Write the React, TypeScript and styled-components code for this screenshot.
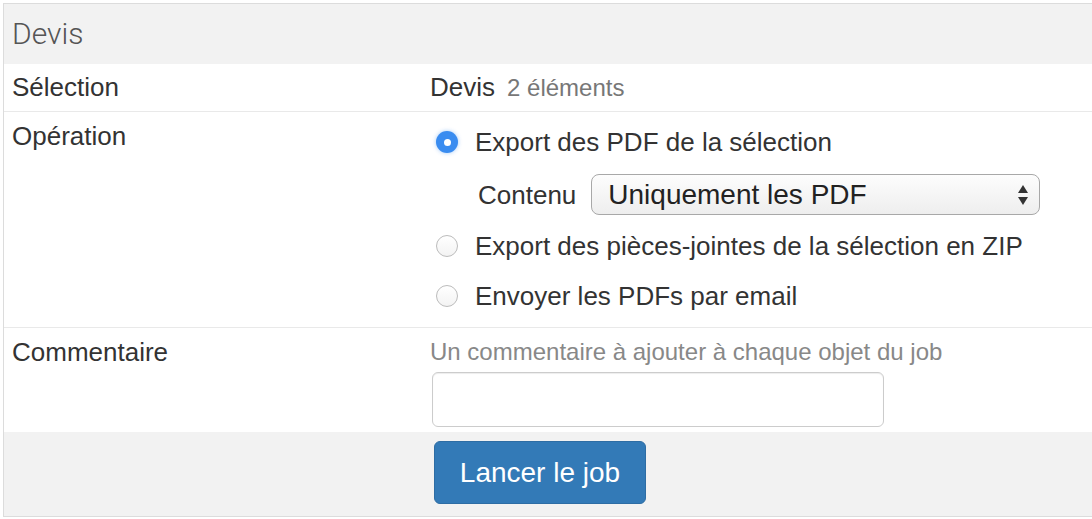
import React from "react";
import styled, { createGlobalStyle, css } from "styled-components";

const Global = createGlobalStyle`
  html, body { margin: 0; padding: 0; background: #fff; overflow: hidden; }
  body { font-family: "Liberation Sans", Arial, Helvetica, sans-serif; color: #333; }
  * { box-sizing: border-box; }
`;

const Panel = styled.div`
  margin: 3px 0 0 3px;
  width: 1200px;
  border: 1px solid #dcdcdc;
`;

const Header = styled.div`
  height: 60px;
  line-height: 60px;
  padding-left: 8px;
  background: #f2f2f2;
  font-family: Roboto, "Liberation Sans", sans-serif;
  font-weight: 300;
  font-size: 30px;
  color: #555;
`;

const Row = styled.div<{ $pt?: number; $pb?: number; $bordered?: boolean; $shade?: boolean }>`
  display: grid;
  grid-template-columns: 418px 1fr;
  padding: ${(p) => p.$pt ?? 10}px 0 ${(p) => p.$pb ?? 10}px;
  border-bottom: ${(p) => (p.$bordered ? "1px solid #e9e9e9" : "none")};
  background: ${(p) => (p.$shade ? "#f2f2f2" : "#fff")};
`;

const Cell = styled.div`
  padding: 0 8px;
  font-size: 26px;
  line-height: 28px;
  color: #333;
`;

const Muted = styled.span`
  margin-left: 12px;
  font-size: 24px;
  color: #777;
`;

const Options = styled.div`
  display: flex;
  flex-direction: column;
  margin: 6px 0 7px 6px;
`;

const Option = styled.label<{ $mt?: number }>`
  display: flex;
  align-items: center;
  gap: 17px;
  margin-top: ${(p) => p.$mt ?? 0}px;
  font-size: 26px;
  line-height: 28px;
  color: #333;
`;

const Radio = styled.span<{ $checked?: boolean }>`
  position: relative;
  flex: none;
  width: 22px;
  height: 22px;
  border-radius: 50%;
  ${(p) =>
    p.$checked
      ? css`
          background: #3a8cf0;
          box-shadow: 0 0 4px rgba(58, 140, 240, 0.45);
          &::after {
            content: "";
            position: absolute;
            left: 7.5px;
            top: 7.5px;
            width: 7px;
            height: 7px;
            border-radius: 50%;
            background: #fff;
          }
        `
      : css`
          border: 1px solid #bcbcbc;
          background: linear-gradient(#ffffff, #f3f3f3);
        `}
`;

const SubOption = styled.div`
  display: flex;
  align-items: center;
  gap: 15px;
  margin: 18px 0 0 42px;
  font-size: 26px;
  color: #333;
`;

const Select = styled.div`
  position: relative;
  width: 449px;
  height: 41px;
  border: 1px solid #a8a8a8;
  border-radius: 8px;
  background: linear-gradient(#fdfdfd, #eeeeee);
  padding-left: 16px;
  font-size: 28px;
  line-height: 39px;
  color: #222;
`;

const Arrows = styled.svg`
  position: absolute;
  right: 10px;
  top: 8px;
`;

const Help = styled.div`
  font-size: 24px;
  line-height: 28px;
  color: #888;
`;

const TextInput = styled.input`
  display: block;
  margin: 6px 0 0 2px;
  width: 452px;
  height: 55px;
  border: 1px solid #cccccc;
  border-radius: 6px;
  box-shadow: inset 0 1px 1px rgba(0, 0, 0, 0.075);
  background: #fff;
  outline: none;
`;

const Button = styled.button`
  margin-left: 4px;
  width: 212px;
  height: 63px;
  background: #337ab7;
  border: 1px solid #2e6da4;
  border-radius: 6px;
  color: #fff;
  font-family: "Liberation Sans", Arial, sans-serif;
  font-size: 28px;
  padding: 0;
`;

export default function App() {
  return (
    <>
      <Global />
      <Panel>
        <Header>Devis</Header>
        <Row $bordered $pt={9} $pb={9}>
          <Cell>Sélection</Cell>
          <Cell>
            Devis<Muted>2 éléments</Muted>
          </Cell>
        </Row>
        <Row $bordered>
          <Cell>Opération</Cell>
          <Cell>
            <Options>
              <Option>
                <Radio $checked />
                Export des PDF de la sélection
              </Option>
              <SubOption>
                Contenu
                <Select>
                  Uniquement les PDF
                  <Arrows width="12" height="24" viewBox="0 0 12 24">
                    <path d="M6 2 L11 10 L1 10 Z" fill="#333" />
                    <path d="M1 14 L11 14 L6 22 Z" fill="#333" />
                  </Arrows>
                </Select>
              </SubOption>
              <Option $mt={17}>
                <Radio />
                Export des pièces-jointes de la sélection en ZIP
              </Option>
              <Option $mt={22}>
                <Radio />
                Envoyer les PDFs par email
              </Option>
            </Options>
          </Cell>
        </Row>
        <Row $pb={5}>
          <Cell>Commentaire</Cell>
          <Cell>
            <Help>Un commentaire à ajouter à chaque objet du job</Help>
            <TextInput type="text" />
          </Cell>
        </Row>
        <Row $shade $pt={9} $pb={12}>
          <Cell />
          <Cell>
            <Button>Lancer le job</Button>
          </Cell>
        </Row>
      </Panel>
    </>
  );
}
